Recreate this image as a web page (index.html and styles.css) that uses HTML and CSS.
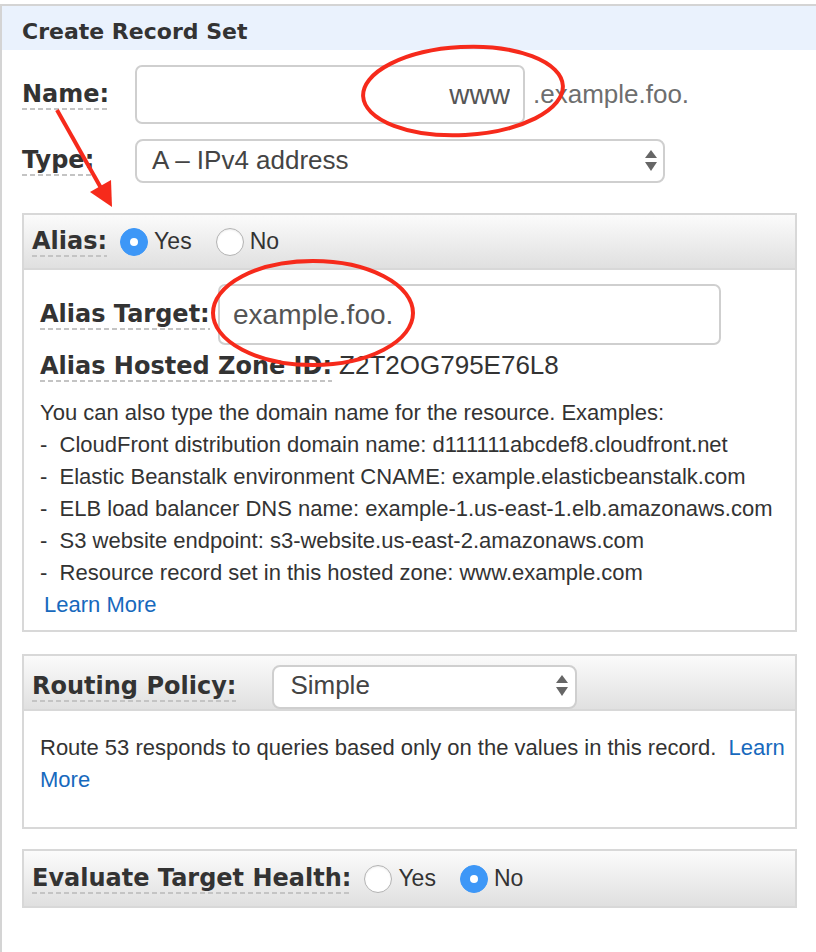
FILE: index.html
```html
<!DOCTYPE html>
<html>
<head>
<meta charset="utf-8">
<title>Create Record Set</title>
<link rel="stylesheet" href="styles.css">
</head>
<body>
<div class="frame">
  <div class="title">Create Record Set</div>
  <div class="content">
    <div class="field-row">
      <div class="lbl-col"><span class="label">Name:</span></div>
      <input class="text-input name-input" type="text" value="www">
      <span class="suffix">.example.foo.</span>
    </div>
    <div class="field-row">
      <div class="lbl-col"><span class="label">Type:</span></div>
      <div class="select type-select">
        <span>A – IPv4 address</span>
        <svg class="arrows" width="12" height="21" viewBox="0 0 12 21"><polygon points="0,8 6,0 12,8" /><polygon points="0,12 12,12 6,21" /></svg>
      </div>
    </div>

    <section class="panel alias-panel">
      <div class="panel-head">
        <span class="label">Alias:</span>
        <div class="radio-group">
          <div class="opt"><span class="radio on"></span><span class="opt-text">Yes</span></div>
          <div class="opt"><span class="radio"></span><span class="opt-text">No</span></div>
        </div>
      </div>
      <div class="panel-body alias-body">
        <div class="alias-target-row">
          <div class="lbl-wide"><span class="label">Alias Target:</span></div>
          <input class="text-input target-input" type="text" value="example.foo.">
        </div>
        <div class="zone-row">
          <span class="label">Alias Hosted Zone ID:</span>
          <span class="zone-value">Z2T2OG795E76L8</span>
        </div>
        <div class="desc">
          <div>You can also type the domain name for the resource. Examples:</div>
          <div>-&nbsp; CloudFront distribution domain name: d111111abcdef8.cloudfront.net</div>
          <div>-&nbsp; Elastic Beanstalk environment CNAME: example.elasticbeanstalk.com</div>
          <div>-&nbsp; ELB load balancer DNS name: example-1.us-east-1.elb.amazonaws.com</div>
          <div>-&nbsp; S3 website endpoint: s3-website.us-east-2.amazonaws.com</div>
          <div>-&nbsp; Resource record set in this hosted zone: www.example.com</div>
        </div>
        <div class="learn"><a href="#">Learn More</a></div>
      </div>
    </section>

    <section class="panel routing-panel">
      <div class="panel-head routing-head">
        <span class="label">Routing Policy:</span>
        <div class="select routing-select">
          <span>Simple</span>
          <svg class="arrows" width="12" height="21" viewBox="0 0 12 21"><polygon points="0,8 6,0 12,8" /><polygon points="0,12 12,12 6,21" /></svg>
        </div>
      </div>
      <div class="panel-body routing-body">
        Route 53 responds to queries based only on the values in this record. <a class="route-link" href="#">Learn<br>More</a>
      </div>
    </section>

    <section class="panel eval-panel">
      <div class="panel-head eval-head">
        <span class="label">Evaluate Target Health:</span>
        <div class="radio-group">
          <div class="opt"><span class="radio"></span><span class="opt-text">Yes</span></div>
          <div class="opt"><span class="radio on"></span><span class="opt-text">No</span></div>
        </div>
      </div>
    </section>
  </div>
</div>

<svg class="annot" width="816" height="952" viewBox="0 0 816 952">
  <g fill="none" stroke="#f62a1b" stroke-width="4">
    <ellipse cx="463" cy="91" rx="100" ry="44" transform="rotate(-3 463 91)"/>
    <ellipse cx="313" cy="313" rx="100" ry="52"/>
    <line x1="57" y1="110" x2="101" y2="188"/>
  </g>
  <polygon points="112,207 90,192 111,180" fill="#f62a1b"/>
</svg>
</body>
</html>
```

FILE: styles.css
```css
* {
  box-sizing: border-box;
}

html,
body {
  margin: 0;
  padding: 0;
  background: #fff;
}

body {
  font-family: "Liberation Sans", Arial, sans-serif;
  color: #333;
}

.frame {
  margin-top: 4px;
  border-top: 2px solid #d4d4d4;
  border-left: 2px solid #d4d4d4;
  min-height: 948px;
}

.title {
  height: 44px;
  padding: 13px 0 0 20px;
  background: #eaf2fd;
  font-family: "DejaVu Sans", Verdana, sans-serif;
  font-weight: bold;
  font-size: 22px;
  line-height: 25px;
  color: #333;
}

.content {
  padding: 15px 19px 0 20px;
}

.field-row {
  display: flex;
  align-items: center;
}

.field-row + .field-row {
  margin-top: 15px;
}

.lbl-col {
  width: 113px;
  flex: none;
  display: flex;
}

.lbl-wide {
  width: 178px;
  flex: none;
  display: flex;
}

.label {
  font-family: "DejaVu Sans", Verdana, sans-serif;
  font-weight: bold;
  font-size: 24px;
  line-height: 28px;
  color: #333;
  white-space: nowrap;
  padding-bottom: 2px;
  background: repeating-linear-gradient(90deg, #c4c4c4 0 5px, transparent 5px 8px) left bottom / 100% 2px no-repeat;
}

.text-input {
  font-family: "Liberation Sans", Arial, sans-serif;
  font-size: 28px;
  color: #555;
  border: 2px solid #cfcfcf;
  border-radius: 7px;
  background: #fff;
  outline: none;
  margin: 0;
}

.name-input {
  width: 390px;
  height: 59px;
  padding: 0 13px;
  text-align: right;
}

.suffix {
  margin-left: 8px;
  font-size: 26px;
  color: #6e6e6e;
}

.select {
  display: flex;
  align-items: center;
  height: 44px;
  border: 2px solid #cfcfcf;
  border-radius: 8px;
  background: #fff;
  font-size: 26px;
  color: #444;
  padding: 0 6px 2px 15px;
}

.select .arrows {
  margin-left: auto;
  fill: #666;
  flex: none;
}

.type-select {
  width: 530px;
}

.panel {
  border: 2px solid #d8d8d8;
}

.alias-panel {
  margin-top: 30px;
}

.routing-panel {
  margin-top: 22px;
}

.eval-panel {
  margin-top: 20px;
}

.panel-head {
  display: flex;
  align-items: center;
  height: 55px;
  padding-left: 8px;
  background: linear-gradient(#fbfbfb, #e0e0e0);
  border-bottom: 2px solid #d8d8d8;
}

.routing-head {
  padding-top: 8px;
}

.eval-head {
  border-bottom: 0;
}

.radio-group {
  display: flex;
  align-items: center;
  margin-left: 13px;
  font-size: 23px;
  color: #333;
}

.opt {
  display: flex;
  align-items: center;
}

.opt + .opt {
  margin-left: 24px;
}

.opt-text {
  margin-left: 6px;
}

.radio {
  width: 28px;
  height: 28px;
  flex: none;
  border-radius: 50%;
  border: 1px solid #b3b3b3;
  background: #fff;
  box-shadow: inset 0 1px 2px rgba(0, 0, 0, 0.08);
}

.radio.on {
  display: flex;
  align-items: center;
  justify-content: center;
  background: #3d97f7;
  border-color: #3d97f7;
  box-shadow: none;
}

.radio.on::after {
  content: "";
  width: 8px;
  height: 8px;
  border-radius: 50%;
  background: #fff;
}

.panel-body {
  background: #fff;
}

.alias-body {
  padding: 14px 16px 9px;
}

.alias-target-row {
  display: flex;
  align-items: center;
}

.target-input {
  width: 503px;
  height: 61px;
  padding: 0 13px;
}

.zone-row {
  display: flex;
  align-items: baseline;
  margin-top: 6px;
}

.zone-value {
  margin-left: 7px;
  font-size: 26px;
  line-height: 28px;
  color: #333;
}

.desc {
  margin-top: 15px;
  font-size: 22px;
  line-height: 32px;
  color: #333;
  white-space: nowrap;
}

.learn {
  font-size: 22px;
  line-height: 32px;
  padding-left: 4px;
}

a {
  color: #1769bd;
  text-decoration: none;
}

.routing-select {
  width: 305px;
  margin-left: 36px;
  padding-left: 16px;
  padding-right: 7px;
}

.routing-body {
  padding: 21px 16px 31px;
  font-size: 22px;
  line-height: 32px;
  color: #333;
  white-space: nowrap;
}

.route-link {
  margin-left: 6px;
}

.annot {
  position: absolute;
  top: 0;
  left: 0;
  pointer-events: none;
}
```
